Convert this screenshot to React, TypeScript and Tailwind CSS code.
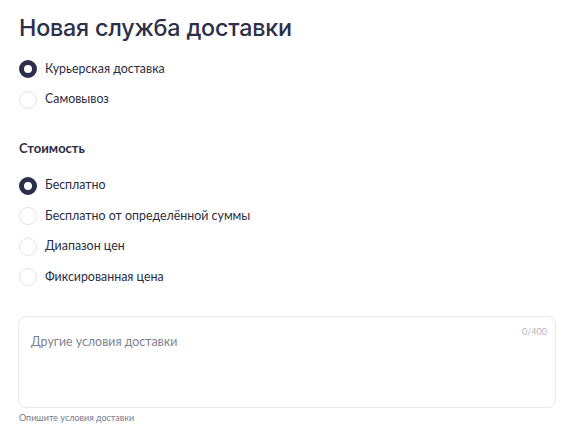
import React, { useState } from 'react';

const Radio = ({ checked, label, onClick }: { checked: boolean; label: string; onClick: () => void }) => (
  <label className="flex items-center h-[30.5px] cursor-pointer" onClick={onClick}>
    <span
      className={`w-[18px] h-[18px] rounded-full box-border shrink-0 ${
        checked ? 'border-[5px] border-[#2c2f4a] bg-white' : 'border border-[#e2e3ea] bg-white'
      }`}
    />
    <span className="ml-[8px] text-[12.4px] text-[#2b2d3f]">{label}</span>
  </label>
);

export default function App() {
  const [type, setType] = useState(0);
  const [price, setPrice] = useState(0);
  const [text, setText] = useState('');

  const types = ['Курьерская доставка', 'Самовывоз'];
  const prices = ['Бесплатно', 'Бесплатно от определённой суммы', 'Диапазон цен', 'Фиксированная цена'];

  return (
    <div className="w-[578px] h-[440px] bg-white font-['Lato',sans-serif] px-[19px] pt-[12px]">
      <h1 className="font-['Inter',sans-serif] text-[23.3px] leading-[32px] font-medium tracking-[-0.2px] text-[#2d2f4b]">
        Новая служба доставки
      </h1>

      <div className="mt-[10px] flex flex-col">
        {types.map((t, i) => (
          <Radio key={t} label={t} checked={type === i} onClick={() => setType(i)} />
        ))}
      </div>

      <h2 className="mt-[24px] text-[13px] font-bold text-[#2b2d45]">Стоимость</h2>

      <div className="mt-[12px] flex flex-col">
        {prices.map((p, i) => (
          <Radio key={p} label={p} checked={price === i} onClick={() => setPrice(i)} />
        ))}
      </div>

      {/* other conditions */}
      <div className="mt-[23px] relative">
        <textarea
          value={text}
          onChange={(e) => setText(e.target.value)}
          placeholder="Другие условия доставки"
          className="block w-[538px] h-[92px] -ml-px resize-none rounded-[8px] border border-[#e6e7ee] px-[12px] pt-[16px] text-[12.4px] text-[#2b2d3f] placeholder:text-[#80818f] outline-none"
        />
        <span className="absolute right-[12px] top-[9px] text-[9px] text-[#b4b5c2]">{text.length}/400</span>
      </div>
      <div className="mt-[3px] text-[9px] text-[#77788a]">Опишите условия доставки</div>
    </div>
  );
}
